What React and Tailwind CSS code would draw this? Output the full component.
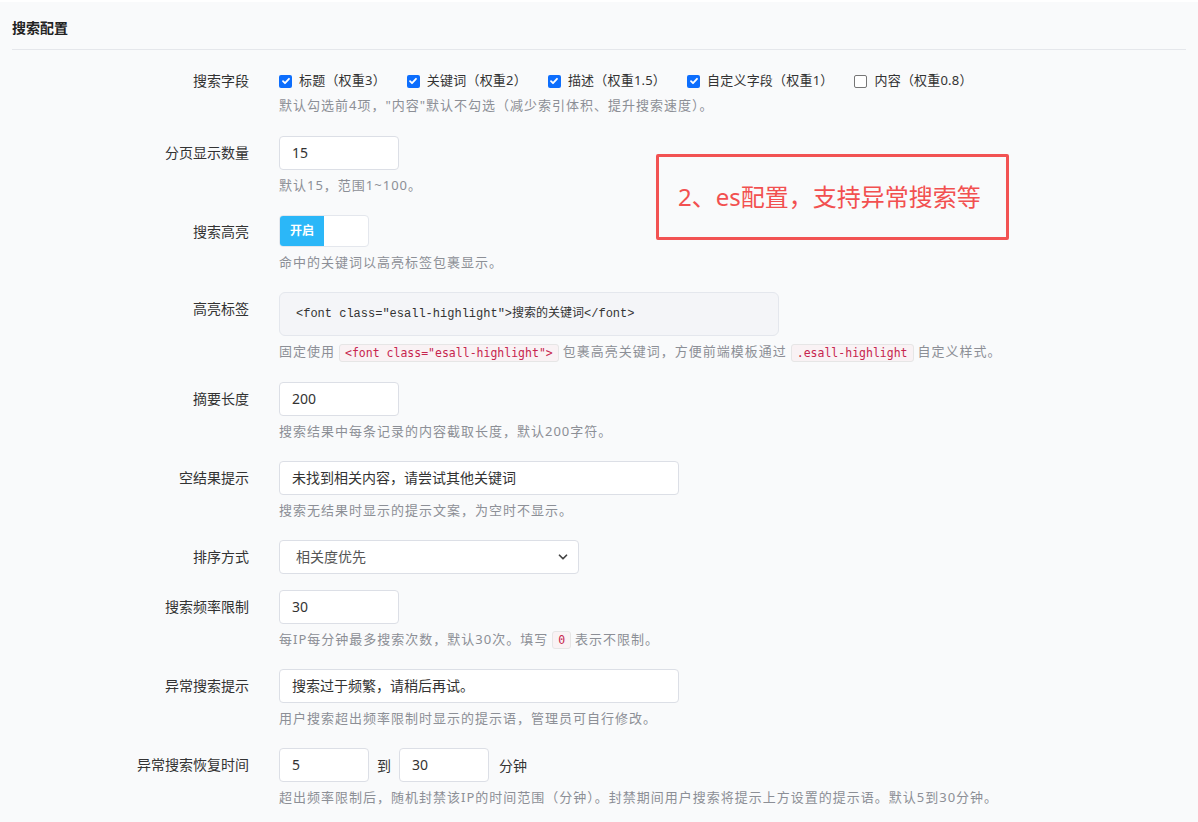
import { ChevronDown } from 'lucide-react'

const sans = "font-['Noto_Sans','Noto_Sans_CJK_SC',sans-serif]"

function Row({ label, children, help, helpClass = 'mt-[5px]', className = 'mb-5' }) {
  return (
    <div className={`flex ${className}`}>
      <div className="w-[237px] shrink-0 text-right text-[14px] leading-[34px] text-[#333]">{label}</div>
      <div className="ml-[30px] flex-1 min-w-0">
        {children}
        {help && <div className={`${helpClass} text-[13px] leading-5 text-[#8c8f96] tracking-[1px]`}>{help}</div>}
      </div>
    </div>
  )
}

function Input({ value, w = 'w-[120px]' }) {
  return (
    <div className={`${w} h-[34px] bg-white border border-[#dcdfe6] rounded-[4px] pl-3 text-[14px] leading-[32px] text-[#333]`}>
      {value}
    </div>
  )
}

function Check({ on, text }) {
  return (
    <label className="flex items-center gap-[7px] text-[13px] text-[#333] tracking-[0.2px]">
      {on ? (
        <span className="w-[13px] h-[13px] rounded-[2px] bg-[#0d6efd] flex items-center justify-center">
          <svg width="10" height="10" viewBox="0 0 10 10"><path d="M2 5.2l2 2L8 2.8" fill="none" stroke="white" strokeWidth="1.8" strokeLinecap="round" strokeLinejoin="round" /></svg>
        </span>
      ) : (
        <span className="w-[13px] h-[13px] rounded-[2px] border border-[#767676] bg-white" />
      )}
      {text}
    </label>
  )
}

function Code({ children }) {
  return (
    <code className="mx-1 inline-block align-middle px-[5px] leading-[16px] bg-[#f9f2f4] border border-[#e6e6e6] rounded-[3px] text-[#c7254e] text-[11.5px] font-['DejaVu_Sans_Mono',monospace] tracking-normal">
      {children}
    </code>
  )
}

export default function App() {
  return (
    <div className={`relative min-h-[822px] bg-[#f9fafb] border-t-2 border-white ${sans}`}>
      <div className="px-3">
        <div className="h-[47px] pt-[16px] leading-5 text-[14px] font-bold text-[#222]">搜索配置</div>
        <div className="border-t border-[#e5e7eb]" />
      </div>

      <div className="px-3 pt-[14px]">
        <Row label="搜索字段" help={'默认勾选前4项，"内容"默认不勾选（减少索引体积、提升搜索速度）。'} helpClass="-mt-[3px]" className="mb-[21px]">
          <div className="flex items-center gap-[21px] h-[34px]">
            <Check on text="标题（权重3）" />
            <Check on text="关键词（权重2）" />
            <Check on text="描述（权重1.5）" />
            <Check on text="自定义字段（权重1）" />
            <Check text="内容（权重0.8）" />
          </div>
        </Row>

        <Row label="分页显示数量" help="默认15，范围1~100。">
          <Input value="15" />
        </Row>

        <Row label="搜索高亮" help="命中的关键词以高亮标签包裹显示。">
          <div className="w-[90px] h-[32px] flex rounded-[4px] border border-[#e4e7ed] bg-white overflow-hidden">
            <div className="w-[44px] bg-[#2bb7f8] text-white text-[12px] font-bold flex items-center justify-center">开启</div>
          </div>
        </Row>

        <Row label="高亮标签" help={<>固定使用<Code>{'<font class="esall-highlight">'}</Code>包裹高亮关键词，方便前端模板通过<Code>.esall-highlight</Code>自定义样式。</>}>
          <div className="w-[500px] h-[44px] bg-[#f4f5f8] border border-[#e4e7ed] rounded-[6px] pl-4 flex items-center text-[12px] text-[#333] font-['Liberation_Mono','Noto_Sans_CJK_SC',monospace]">
            {'<font class="esall-highlight">搜索的关键词</font>'}
          </div>
        </Row>

        <Row label="摘要长度" help="搜索结果中每条记录的内容截取长度，默认200字符。">
          <Input value="200" />
        </Row>

        <Row label="空结果提示" help="搜索无结果时显示的提示文案，为空时不显示。">
          <Input value="未找到相关内容，请尝试其他关键词" w="w-[400px]" />
        </Row>

        <Row label="排序方式" className="mb-4">
          <div className="w-[300px] h-[34px] bg-white border border-[#dcdfe6] rounded-[4px] pl-4 pr-2 flex items-center justify-between text-[14px] text-[#555]">
            相关度优先
            <ChevronDown size={14} strokeWidth={3} className="text-[#444]" />
          </div>
        </Row>

        <Row label="搜索频率限制" help={<>每IP每分钟最多搜索次数，默认30次。填写<Code>0</Code>表示不限制。</>}>
          <Input value="30" />
        </Row>

        <Row label="异常搜索提示" help="用户搜索超出频率限制时显示的提示语，管理员可自行修改。">
          <Input value="搜索过于频繁，请稍后再试。" w="w-[400px]" />
        </Row>

        <Row label="异常搜索恢复时间" help="超出频率限制后，随机封禁该IP的时间范围（分钟）。封禁期间用户搜索将提示上方设置的提示语。默认5到30分钟。">
          <div className="flex items-center text-[14px] text-[#333]">
            <Input value="5" w="w-[90px]" />
            <span className="mx-2">到</span>
            <Input value="30" w="w-[90px]" />
            <span className="ml-[10px]">分钟</span>
          </div>
        </Row>
      </div>

      <div className="absolute left-[656px] top-[152px] w-[353px] h-[86px] border-[3px] border-[#f25252] rounded-[2px] flex items-center pl-[19px] text-[24px] text-[#f25050]">
        2、es配置，支持异常搜索等
      </div>
    </div>
  )
}
